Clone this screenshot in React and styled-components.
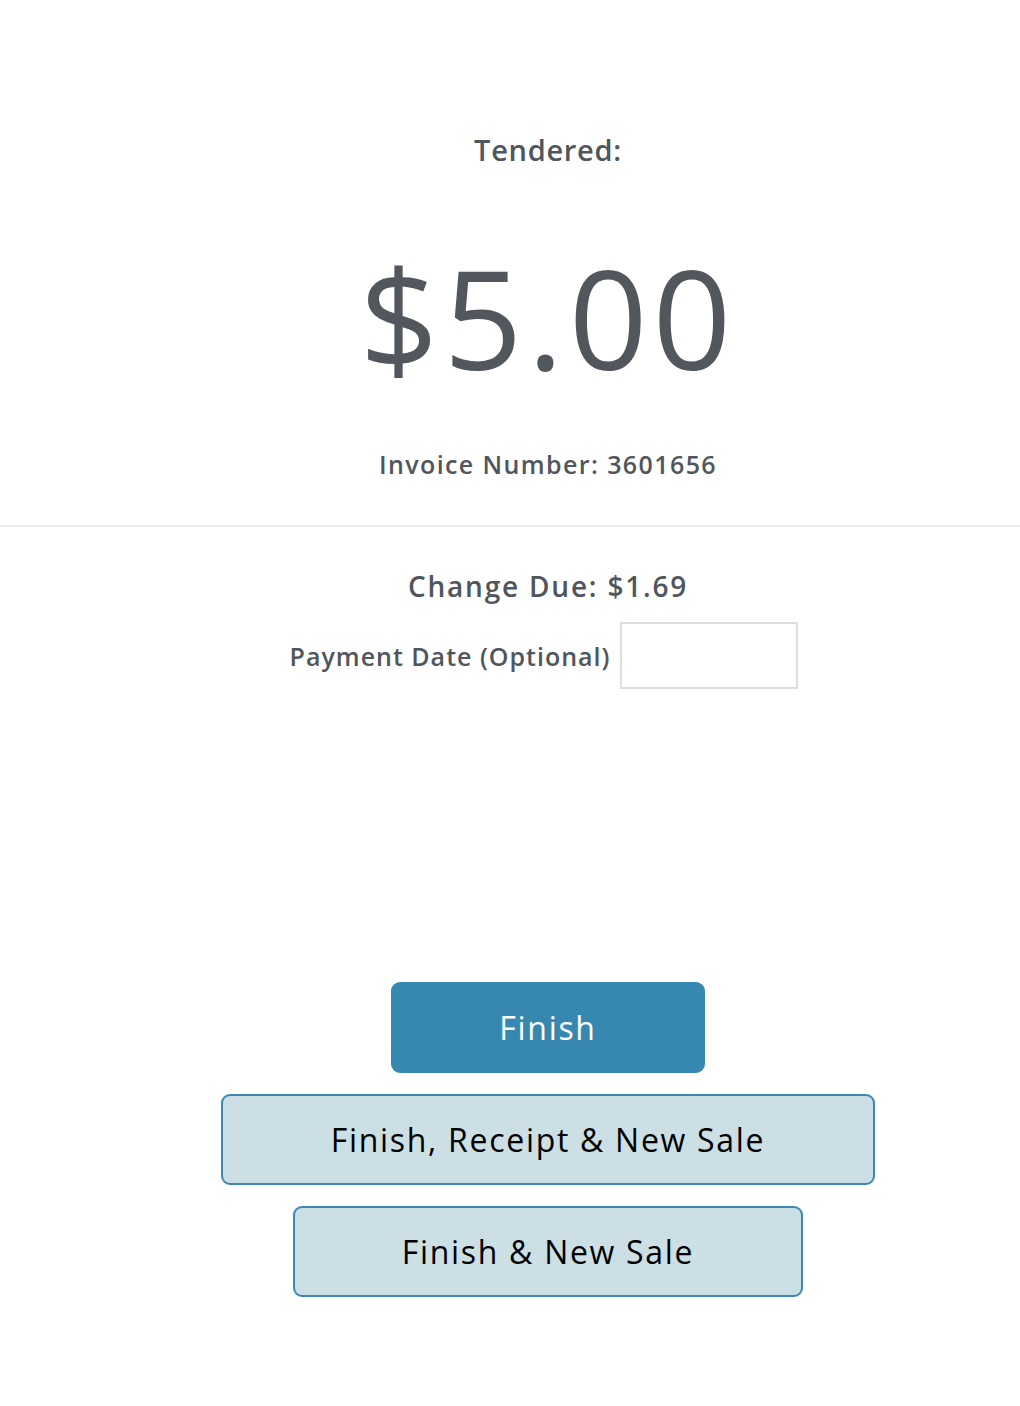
import styled, { createGlobalStyle } from "styled-components";

const GlobalStyle = createGlobalStyle`
	html, body {
		margin: 0;
		padding: 0;
		background: #ffffff;
	}
	body {
		font-family: "Open Sans", "Noto Sans", sans-serif;
		color: #50565d;
	}
`;

const App = () => {
	return (
		<Page>
			<GlobalStyle />
			<Summary>
				<Column>
					<Label>Tendered:</Label>
					<Amount>$5.00</Amount>
					<Invoice>Invoice Number: 3601656</Invoice>
				</Column>
			</Summary>
			<Details>
				<Column>
					<ChangeDue>Change Due: $1.69</ChangeDue>
					<DateRow>
						<DateLabel htmlFor="payment-date">Payment Date (Optional)</DateLabel>
						<DateInput id="payment-date" type="text" />
					</DateRow>
					<Actions>
						<Button $primary $width={314}>Finish</Button>
						<Button $width={654}>Finish, Receipt &amp; New Sale</Button>
						<Button $width={510}>Finish &amp; New Sale</Button>
					</Actions>
				</Column>
			</Details>
		</Page>
	);
};

export default App;

const Page = styled.div`
	width: 1020px;
	min-height: 1406px;
	background: #ffffff;
`;

const Summary = styled.section`
	padding-top: 130px;
	padding-bottom: 44px;
	border-bottom: 2px solid #ececec;
`;

const Details = styled.section`
	padding-top: 40px;
`;

const Column = styled.div`
	margin-left: 76px;
	display: flex;
	flex-direction: column;
	align-items: center;
`;

const Label = styled.div`
	font-size: 29px;
	font-weight: 600;
	line-height: 40px;
	letter-spacing: 0.7px;
`;

const Amount = styled.div`
	margin-top: 66px;
	font-size: 138px;
	font-weight: 400;
	line-height: 160px;
	letter-spacing: 5px;
	color: #52575e;
`;

const Invoice = styled.div`
	margin-top: 51px;
	font-size: 25px;
	font-weight: 600;
	line-height: 34px;
	letter-spacing: 1.4px;
`;

const ChangeDue = styled.div`
	font-size: 28px;
	font-weight: 600;
	line-height: 38px;
	letter-spacing: 1.8px;
`;

const DateRow = styled.div`
	margin-top: 17px;
	display: flex;
	align-items: center;
	gap: 10px;
	margin-right: 8px;
`;

const DateLabel = styled.label`
	font-size: 25px;
	font-weight: 600;
	letter-spacing: 1px;
`;

const DateInput = styled.input`
	width: 178px;
	height: 67px;
	box-sizing: border-box;
	border: 2px solid #dedede;
	background: #ffffff;
	outline: none;
`;

const Actions = styled.div`
	margin-top: 293px;
	display: flex;
	flex-direction: column;
	align-items: center;
	gap: 21px;
`;

const Button = styled.button`
	width: ${(p) => p.$width}px;
	height: 91px;
	box-sizing: border-box;
	border-radius: 9px;
	border: 2px solid ${(p) => (p.$primary ? "#3788b0" : "#3a88b3")};
	background: ${(p) => (p.$primary ? "#3788b0" : "#cbdfe4")};
	color: ${(p) => (p.$primary ? "#ffffff" : "#000000")};
	font-family: "Open Sans", "Noto Sans", sans-serif;
	font-size: 32px;
	font-weight: 400;
	letter-spacing: 1.7px;
	cursor: pointer;
`;
